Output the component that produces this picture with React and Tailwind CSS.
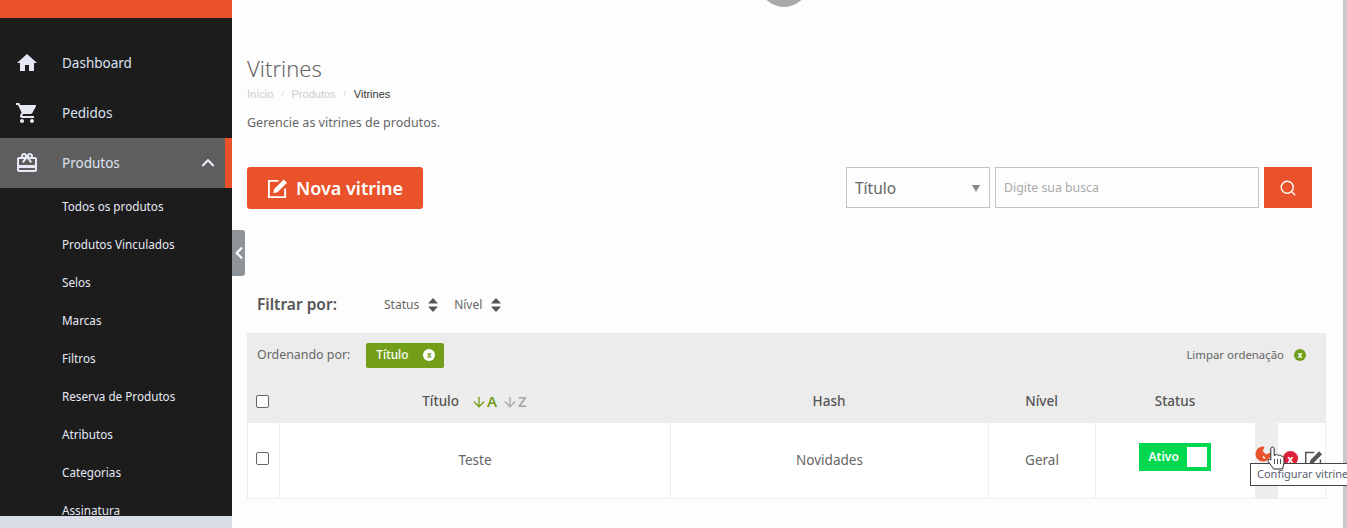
import { MdHome, MdShoppingCart, MdCardGiftcard, MdKeyboardArrowUp } from "react-icons/md";
import { FaChevronLeft } from "react-icons/fa";
import { Search, ArrowDown } from "lucide-react";

const font = "font-['Noto_Sans',sans-serif]";

const subItems = [
  "Todos os produtos",
  "Produtos Vinculados",
  "Selos",
  "Marcas",
  "Filtros",
  "Reserva de Produtos",
  "Atributos",
  "Categorias",
  "Assinatura",
];

function EditIcon({ className, strokeWidth = 2 }) {
  return (
    <svg viewBox="0 0 22 22" className={className}>
      <path d="M12 3H2v17h17v-9" fill="none" stroke="currentColor" strokeWidth={strokeWidth} />
      <path d="M17.500 1.500 21 5 11 15l-4.500 1 1-4.500z" fill="currentColor" />
    </svg>
  );
}

function SortCaret() {
  return (
    <svg width="10" height="14" viewBox="0 0 10 14" className="fill-[#555]">
      <path d="M5 0 10 5.500H0z" />
      <path d="M5 14 0 8.500h10z" />
    </svg>
  );
}

function Checkbox() {
  return <span className="block h-[13px] w-[13px] rounded-[2px] border border-[#666] bg-white" />;
}

function XDot({ className }) {
  return (
    <span className={`flex h-[12px] w-[12px] items-center justify-center rounded-full text-[8px] font-bold leading-none ${className}`}>
      x
    </span>
  );
}

function NavItem({ icon, label, active }) {
  return (
    <div className={`flex h-[50px] items-center ${active ? "border-r-[7px] border-[#e9522a] bg-[#5e5e5e]" : ""}`}>
      <span className="flex w-[62px] justify-center pr-[8px] text-[#e6e9f5]">{icon}</span>
      <span className="flex-1 pb-[0.5px] text-[13.5px] text-[#dfe3f2]">{label}</span>
      {active && <MdKeyboardArrowUp size={26} className="mr-[4px] text-[#e6e9f5]" />}
    </div>
  );
}

function Sidebar() {
  return (
    <aside className="flex h-full w-[232px] shrink-0 flex-col">
      <div className="h-[18px] bg-[#e9522a]" />
      <nav className="flex-1 overflow-hidden bg-[#1c1c1c] pt-[20px]">
        <NavItem icon={<MdHome size={24} />} label="Dashboard" />
        <NavItem icon={<MdShoppingCart size={24} />} label="Pedidos" />
        <NavItem icon={<MdCardGiftcard size={24} />} label="Produtos" active />
        {subItems.map((item) => (
          <div key={item} className="flex h-[38px] items-center pl-[62px] text-[11.7px] text-[#e6e9f5]">
            {item}
          </div>
        ))}
      </nav>
      <div className="h-[12px] bg-[#d9dde8]" />
    </aside>
  );
}

function Toolbar() {
  return (
    <div className="mt-[35px] flex items-start justify-between pr-[18px]">
      <button className="flex h-[42px] w-[176px] items-center justify-center gap-[8px] rounded-[3px] bg-[#e9522a] text-[18px] font-semibold text-white">
        <EditIcon className="h-[21px] w-[21px]" />
        Nova vitrine
      </button>
      <div className="flex h-[41px] gap-[5px]">
        <div className="flex w-[144px] items-center justify-between border border-[#c2c2c2] pl-[8px] pr-[9px] pt-[2px] text-[15.5px] text-[#666]">
          Título
          <span className="h-0 w-0 border-x-[4px] border-t-[7px] border-x-transparent border-t-[#888]" />
        </div>
        <div className="flex w-[264px] items-center border border-[#c2c2c2] pl-[8px] pt-[2px] text-[12.3px] text-[#a9a9a9]">
          Digite sua busca
        </div>
        <button className="flex w-[48px] items-center justify-center bg-[#e9522a] text-white">
          <Search size={18} strokeWidth={1.8} />
        </button>
      </div>
    </div>
  );
}

function Filters() {
  return (
    <div className="mt-[86px] flex h-[20px] items-center pl-[10px] text-[#666]">
      <span className="w-[127px] text-[15.5px] font-semibold text-[#555]">Filtrar por:</span>
      <span className="text-[12px]">Status</span>
      <span className="ml-[9px]"><SortCaret /></span>
      <span className="ml-[16px] text-[12px]">Nível</span>
      <span className="ml-[9px]"><SortCaret /></span>
    </div>
  );
}

function SortBar() {
  return (
    <div className="flex h-[44px] items-center justify-between pl-[10px] pr-[20px] text-[#666]">
      <div className="flex items-center gap-[16px] text-[12.4px]">
        <span>Ordenando por:</span>
        <span className="flex h-[25px] w-[78px] items-center justify-between rounded-[2px] bg-[#729e1a] pl-[10px] pr-[9px] text-[11.8px] font-medium text-white">
          Título
          <XDot className="bg-white text-[#729e1a]" />
        </span>
      </div>
      <div className="flex items-center gap-[10px] text-[11.4px]">
        <span>Limpar ordenação</span>
        <XDot className="bg-[#729e1a] text-white" />
      </div>
    </div>
  );
}

function HeaderRow() {
  return (
    <div className="flex h-[46px] items-center pt-[3px] text-[13.5px] font-medium text-[#555]">
      <div className="flex w-[32px] justify-center pb-[1px] pr-[1px]"><Checkbox /></div>
      <div className="flex w-[391px] items-center justify-center">
        Título
        <span className="ml-[12px] flex items-center text-[15px] font-semibold text-[#729e1a]">
          <ArrowDown size={16} />A
        </span>
        <span className="ml-[5px] flex items-center text-[15px] font-semibold text-[#aaa]">
          <ArrowDown size={16} />Z
        </span>
      </div>
      <div className="w-[318px] text-center">Hash</div>
      <div className="w-[107px] text-center">Nível</div>
      <div className="w-[160px] text-center">Status</div>
    </div>
  );
}

function BodyRow() {
  const cell = "flex h-full items-center justify-center border-r border-[#eee]";
  return (
    <div className="flex h-[76px] items-stretch border-x border-b border-[#eee] bg-white text-[13.5px] text-[#666]">
      <div className={`${cell} w-[32px] pb-[5px] pr-[2px]`}><Checkbox /></div>
      <div className={`${cell} w-[391px]`}>Teste</div>
      <div className={`${cell} w-[318px]`}>Novidades</div>
      <div className={`${cell} w-[107px]`}>Geral</div>
      <div className="flex h-full w-[159px] items-center justify-center pb-[8px] pr-[2px]">
        <div className="flex h-[28px] w-[72px] items-center justify-between bg-[#00d84f] pl-[10px] pr-[4px] text-[12px] font-semibold text-white">
          Ativo
          <span className="h-[20px] w-[20px] bg-white" />
        </div>
      </div>
      <div className="w-[23px] bg-[#eee]" />
      <div className="flex-1" />
    </div>
  );
}

function RowActions() {
  return (
    <>
      <svg viewBox="0 0 16 16" className="absolute left-[1023px] top-[446px] h-[16px] w-[16px]">
        <path d="M9.500.7A7.500 7.500 0 1 0 15.300 6.500L11 8.500 7.800 5.300Z" fill="#e9522a" />
        <path d="M8 10.500 10 12.500" stroke="#fff" strokeWidth="1.500" />
      </svg>
      <span className="absolute left-[1051px] top-[451px] flex h-[15px] w-[15px] items-center justify-center rounded-full bg-[#dc2038] text-[10px] font-bold leading-none text-white">
        x
      </span>
      <EditIcon strokeWidth={1.7} className="absolute left-[1072px] top-[450px] h-[19px] w-[19px] text-[#555]" />
      <div className="absolute left-[1018px] top-[463px] flex h-[23px] w-[110px] items-center whitespace-nowrap border border-[#444] bg-white pl-[6px] text-[11px] text-[#57606f]">
        Configurar vitrine
      </div>
      <svg viewBox="0 0 18 24" className="absolute left-[1035px] top-[446px] h-[24px] w-[18px]">
        <path
          d="M5.500 1C6.500 1 7.200 1.800 7.200 2.800V9.500L8.500 9C9 8.300 10.500 8.300 11 9.300L11.800 9.500C12.500 8.800 14 9 14.400 10.200 15.600 9.900 17 10.700 17 12V16.500C17 18.800 16 20.500 15.500 23H6.500C5.800 21 3.500 19 1.300 15.500.5 14 2 12.500 3.800 14L3.800 2.800C3.800 1.800 4.500 1 5.500 1Z"
          fill="#fff"
          stroke="#222"
          strokeWidth="1"
        />
        <path d="M7.500 13v5M10.500 13v5M13.500 13v5" stroke="#222" strokeWidth=".8" />
      </svg>
    </>
  );
}

export default function App() {
  return (
    <div className={`${font} relative flex h-[528px] w-[1347px] overflow-hidden bg-[#fdfdfd]`}>
      <Sidebar />
      <main className="relative flex-1 pl-[15px] pr-[17px] pt-[54px]">
        <div className="absolute bottom-0 right-0 top-0 w-[4px] bg-[#c8c8c8]" />
        <div className="absolute left-[527px] top-[-43px] h-[50px] w-[50px] rounded-full bg-[#aaa]" />
        <h1 className="text-[22px] font-light leading-[28px] text-[#666]">Vitrines</h1>
        <div className="mt-[4px] flex h-[16px] items-center font-['Liberation_Sans',sans-serif] text-[11px]">
          <span className="text-[#ccc]">Início</span>
          <span className="mx-[8px] text-[8px] text-[#ccc]">/</span>
          <span className="text-[#ccc]">Produtos</span>
          <span className="mx-[8px] text-[8px] text-[#ccc]">/</span>
          <span className="text-[#333]">Vitrines</span>
        </div>
        <p className="mt-[12px] text-[12.5px] leading-[18px] text-[#666]">Gerencie as vitrines de produtos.</p>
        <Toolbar />
        <Filters />
        <div className="mt-[18px] w-[1079px] bg-[#ececec]">
          <SortBar />
          <HeaderRow />
          <BodyRow />
        </div>
        <div className="absolute left-0 top-[230px] flex h-[46px] w-[13px] items-center justify-center rounded-r-[3px] bg-[#8e9398] text-white">
          <FaChevronLeft size={14} className="shrink-0" />
        </div>
        <RowActions />
      </main>
    </div>
  );
}
